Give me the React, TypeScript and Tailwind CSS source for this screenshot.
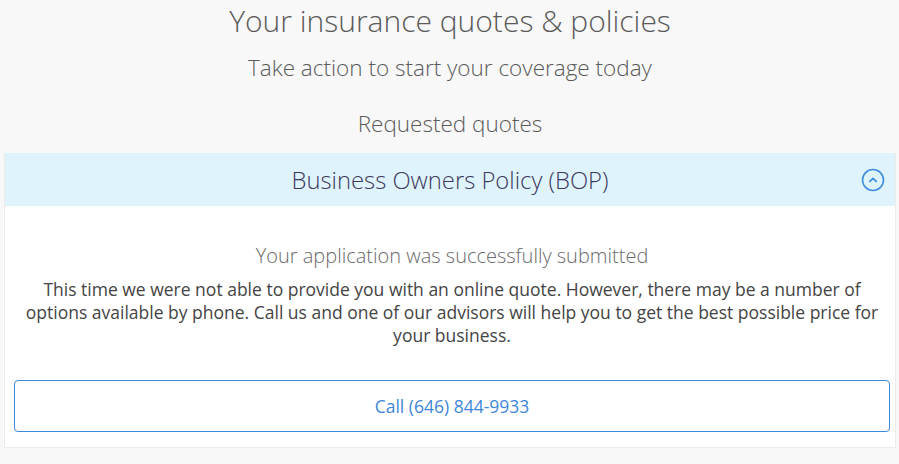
const ChevronCircle = () => (
  <svg width="24" height="24" viewBox="0 0 24 24" fill="none" stroke="#3d8fe0" strokeWidth="1.6" strokeLinecap="round" strokeLinejoin="round">
    <circle cx="12" cy="12" r="10.5" />
    <path d="M8.8 13.4 12 10.4l3.2 3" strokeWidth="1.8" />
  </svg>
);

export default function App() {
  return (
    <div className="min-h-[464px] bg-[#f8f8f8] pr-[3px] pl-[4px] font-['Open_Sans',sans-serif]">
      <div className="flex flex-col items-center">
        <h1 className="mt-[1px] text-[30px] leading-[40px] font-light text-[#5a5a5a]">
          Your insurance quotes &amp; policies
        </h1>
        <p className="mt-[12px] text-[22.5px] leading-[30px] font-light text-[#5a5a5a]">
          Take action to start your coverage today
        </p>
        <h2 className="mt-[26px] text-[22.5px] leading-[30px] font-light text-[#5a5a5a]">
          Requested quotes
        </h2>
      </div>
      <div className="mt-[14px] border border-t-0 border-[#ebebeb] bg-white">
        <div className="relative flex h-[53px] items-center justify-center bg-[#dff3fd]">
          <span className="text-[23.8px] leading-[30px] font-light text-[#3c3a5c]">
            Business Owners Policy (BOP)
          </span>
          <span className="absolute top-[15px] right-[10px]">
            <ChevronCircle />
          </span>
        </div>
        <div className="pt-[37px] pr-[5px] pb-[15px] pl-[9px] text-center">
          <p className="text-[20px] leading-[26px] font-light text-[#6a6a6a]">
            Your application was successfully submitted
          </p>
          <p className="mt-[9px] px-[4px] text-[17.5px] leading-[23px] text-[#444]">
            This time we were not able to provide you with an online quote. However, there may be a number of options
            available by phone. Call us and one of our advisors will help you to get the best possible price for your
            business.
          </p>
          <button className="mt-[33px] flex h-[52px] w-full items-center justify-center rounded-[4px] border border-[#3f87d9] bg-white text-[17.5px] text-[#3f87d9]">
            Call (646) 844-9933
          </button>
        </div>
      </div>
    </div>
  );
}
